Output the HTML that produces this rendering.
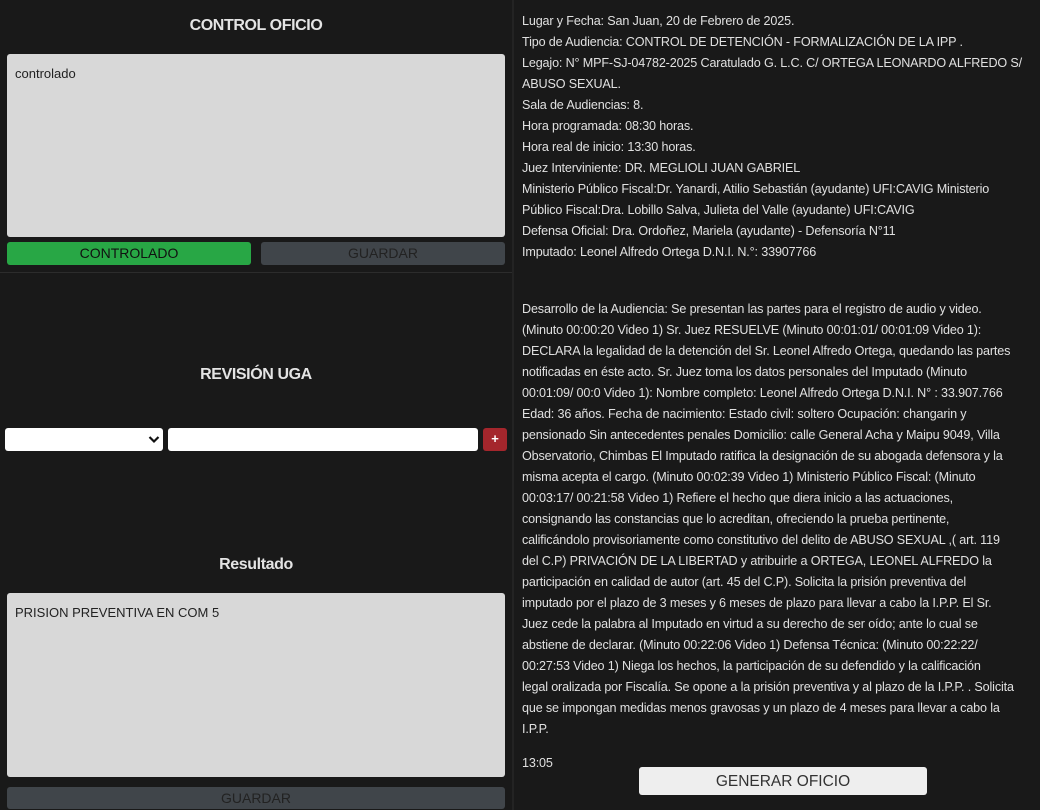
<!DOCTYPE html>
<html><head><meta charset="utf-8"><style>
*{box-sizing:border-box;margin:0;padding:0}
body{width:1040px;height:810px;background:#191919;font-family:"Liberation Sans",sans-serif;position:relative;overflow:hidden;color:#ddd}
.a{position:absolute}
h2{position:absolute;left:0;width:512px;text-align:center;font-size:16px;font-weight:bold;color:#e4e4e4;letter-spacing:-0.4px}
.ta{background:#d8d8d8;border-radius:3px;color:#222;font-size:13px;padding:12px 8px}
.btn{border-radius:3px;text-align:center;font-size:14px;line-height:23px}
.r{left:522px;top:11px;font-size:12.6px;line-height:21px;color:#e0e0e0;white-space:nowrap;letter-spacing:-0.15px}
</style></head><body>
<div class="a" style="left:512px;top:0;width:2px;height:810px;background:#232323"></div>
<div class="a" style="left:0;top:272px;width:512px;height:1px;background:#2c2c2c"></div>
<h2 style="top:17px">CONTROL OFICIO</h2>
<div class="a ta" style="left:7px;top:54px;width:498px;height:183px">controlado</div>
<div class="a btn" style="left:7px;top:242px;width:244px;height:23px;background:#28a745;color:#111">CONTROLADO</div>
<div class="a btn" style="left:261px;top:242px;width:244px;height:23px;background:#40454a;color:#222">GUARDAR</div>
<h2 style="top:366px">REVISIÓN UGA</h2>
<div class="a" style="left:5px;top:428px;width:158px;height:23px;background:#fff;border-radius:3px"><svg class="a" style="left:143px;top:7px" width="12" height="9" viewBox="0 0 12 9"><path d="M1.5 2 L6 6.5 L10.5 2" stroke="#111" stroke-width="2.2" fill="none"/></svg></div>
<div class="a" style="left:168px;top:428px;width:310px;height:23px;background:#fff;border-radius:3px"></div>
<div class="a" style="left:483px;top:428px;width:24px;height:23px;background:#a4262c;border-radius:3px;color:#fff;font-size:13px;font-weight:bold;text-align:center;line-height:22px">+</div>
<h2 style="top:556px">Resultado</h2>
<div class="a ta" style="left:7px;top:593px;width:498px;height:184px">PRISION PREVENTIVA EN COM 5</div>
<div class="a btn" style="left:7px;top:787px;width:498px;height:22px;background:#40454a;color:#222">GUARDAR</div>
<div class="a r">Lugar y Fecha: San Juan, 20 de Febrero de 2025.<br>Tipo de Audiencia: CONTROL DE DETENCIÓN - FORMALIZACIÓN DE LA IPP .<br>Legajo: N° MPF-SJ-04782-2025 Caratulado G. L.C. C/ ORTEGA LEONARDO ALFREDO S/<br>ABUSO SEXUAL.<br>Sala de Audiencias: 8.<br>Hora programada: 08:30 horas.<br>Hora real de inicio: 13:30 horas.<br>Juez Interviniente: DR. MEGLIOLI JUAN GABRIEL<br>Ministerio Público Fiscal:Dr. Yanardi, Atilio Sebastián (ayudante) UFI:CAVIG Ministerio<br>Público Fiscal:Dra. Lobillo Salva, Julieta del Valle (ayudante) UFI:CAVIG<br>Defensa Oficial: Dra. Ordoñez, Mariela (ayudante) - Defensoría N°11<br>Imputado: Leonel Alfredo Ortega D.N.I. N.°: 33907766</div>
<div class="a r" style="top:299px">Desarrollo de la Audiencia: Se presentan las partes para el registro de audio y video.<br>(Minuto 00:00:20 Video 1) Sr. Juez RESUELVE (Minuto 00:01:01/ 00:01:09 Video 1):<br>DECLARA la legalidad de la detención del Sr. Leonel Alfredo Ortega, quedando las partes<br>notificadas en éste acto. Sr. Juez toma los datos personales del Imputado (Minuto<br>00:01:09/ 00:0 Video 1): Nombre completo: Leonel Alfredo Ortega D.N.I. N° : 33.907.766<br>Edad: 36 años. Fecha de nacimiento: Estado civil: soltero Ocupación: changarin y<br>pensionado Sin antecedentes penales Domicilio: calle General Acha y Maipu 9049, Villa<br>Observatorio, Chimbas El Imputado ratifica la designación de su abogada defensora y la<br>misma acepta el cargo. (Minuto 00:02:39 Video 1) Ministerio Público Fiscal: (Minuto<br>00:03:17/ 00:21:58 Video 1) Refiere el hecho que diera inicio a las actuaciones,<br>consignando las constancias que lo acreditan, ofreciendo la prueba pertinente,<br>calificándolo provisoriamente como constitutivo del delito de ABUSO SEXUAL ,( art. 119<br>del C.P) PRIVACIÓN DE LA LIBERTAD y atribuirle a ORTEGA, LEONEL ALFREDO la<br>participación en calidad de autor (art. 45 del C.P). Solicita la prisión preventiva del<br>imputado por el plazo de 3 meses y 6 meses de plazo para llevar a cabo la I.P.P. El Sr.<br>Juez cede la palabra al Imputado en virtud a su derecho de ser oído; ante lo cual se<br>abstiene de declarar. (Minuto 00:22:06 Video 1) Defensa Técnica: (Minuto 00:22:22/<br>00:27:53 Video 1) Niega los hechos, la participación de su defendido y la calificación<br>legal oralizada por Fiscalía. Se opone a la prisión preventiva y al plazo de la I.P.P. . Solicita<br>que se impongan medidas menos gravosas y un plazo de 4 meses para llevar a cabo la<br>I.P.P.</div>
<div class="a r" style="top:753px">13:05</div>
<div class="a" style="left:639px;top:767px;width:288px;height:28px;background:#eee;border-radius:3px;color:#333;font-size:15.5px;text-align:center;line-height:29px">GENERAR OFICIO</div>
</body></html>
